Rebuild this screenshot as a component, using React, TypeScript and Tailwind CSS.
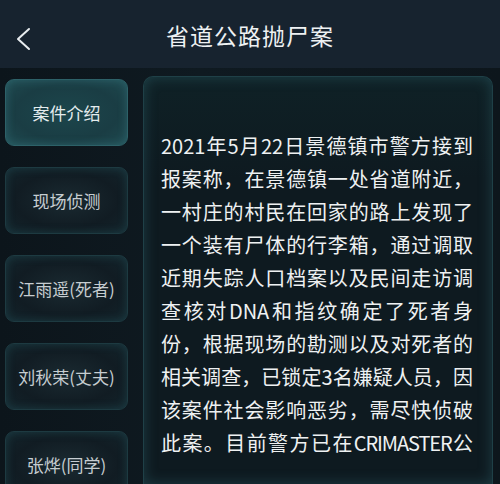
import React from "react";

const tabs = ["案件介绍", "现场侦测", "江雨遥(死者)", "刘秋荣(丈夫)", "张烨(同学)"];

const lines: React.ReactNode[] = [
  "2021年5月22日景德镇市警方接到",
  "报案称，在景德镇一处省道附近，",
  "一村庄的村民在回家的路上发现了",
  "一个装有尸体的行李箱，通过调取",
  "近期失踪人口档案以及民间走访调",
  "查核对DNA和指纹确定了死者身",
  "份，根据现场的勘测以及对死者的",
  "相关调查，已锁定3名嫌疑人员，因",
  "该案件社会影响恶劣，需尽快侦破",
  <>
    此案。目前警方已在<span className="tracking-[-1.1px]">CRIMASTER</span>公
  </>,
];

export default function App() {
  const font = { fontFamily: '"Noto Sans CJK SC", "Noto Sans", sans-serif' };
  return (
    <div className="w-[500px] h-[484px] overflow-hidden bg-[#0d151c] text-white flex flex-col" style={font}>
      <div className="h-[68px] shrink-0 bg-[#17232f] relative flex items-center justify-center">
        <svg className="absolute left-[14px] top-[27px]" width="18" height="24" viewBox="0 0 18 24" fill="none">
          <path d="M15 2 L4 12 L15 22" stroke="#e8ecef" strokeWidth="2" strokeLinecap="round" strokeLinejoin="round" />
        </svg>
        <div className="text-[23px] text-[#eef1f3] tracking-[1px] leading-none mt-[2px]">省道公路抛尸案</div>
      </div>
      <div className="flex flex-1 min-h-0 pt-[11px] pl-[5px] gap-[15px] pr-[7px] bg-[linear-gradient(90deg,#0c151b,#0f1a21_40%,#0d161c)]">
        <div className="w-[123px] shrink-0 flex flex-col gap-[21px]">
          {tabs.map((t, i) => (
            <div
              key={t}
              className={
                "h-[67px] shrink-0 rounded-[9px] flex items-center justify-center text-[17px] border " +
                (i === 0
                  ? "bg-[radial-gradient(ellipse_at_center,#1c464c,#1a3d44_60%,#1f4a50)] border-[#2d6168] text-[#e4ecee] shadow-[inset_0_0_10px_rgba(70,150,160,0.35)]"
                  : "bg-[radial-gradient(ellipse_at_center,#1a2a31,#111c23_60%,#13242b)] border-[#1d3a41] text-[#c6cdd1] shadow-[inset_0_0_10px_rgba(50,120,130,0.3)]")
              }
            >
              {t}
            </div>
          ))}
        </div>
        <div className="flex-1 mt-[-3px] rounded-t-[10px] border border-b-0 border-[#1f4047] bg-[linear-gradient(180deg,#0f2126,#0e1a20_25%,#0e1a20)] shadow-[inset_0_0_14px_rgba(60,130,140,0.35)] pl-[17px] pt-[52px]">
          {lines.map((l, i) => (
            <div
              key={i}
              className="w-[312px] h-[33px] leading-[33px] text-[20px] whitespace-nowrap text-justify [text-align-last:justify] text-[#eef1f2]"
            >
              {l}
            </div>
          ))}
        </div>
      </div>
    </div>
  );
}
